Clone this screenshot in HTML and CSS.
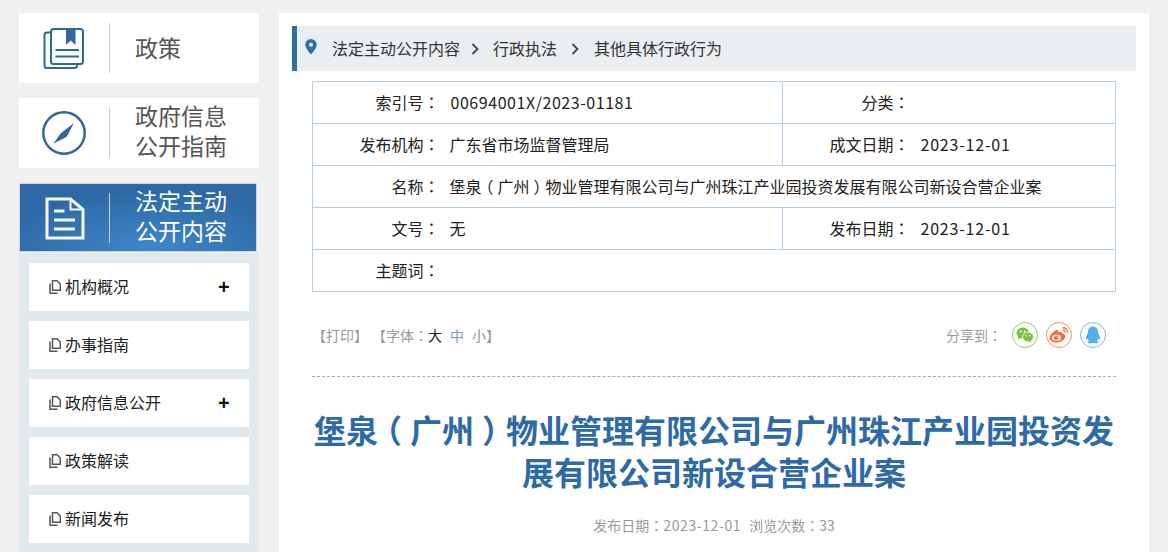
FILE: index.html
```html
<!DOCTYPE html>
<html lang="zh-CN">
<head>
<meta charset="utf-8">
<title>堡泉（广州）物业管理有限公司与广州珠江产业园投资发展有限公司新设合营企业案</title>
<link rel="stylesheet" href="styles.css">
</head>
<body>
<div class="page">
  <aside class="side">
    <a class="card">
      <span class="card-icon">
        <svg width="48" height="48" viewBox="0 0 48 48" fill="none" stroke="#2e689f" stroke-width="2">
          <path d="M10.500 8.500H7a2.500 2.500 0 0 0-2.500 2.500V41.500A2.500 2.500 0 0 0 7 44H34.500a2.500 2.500 0 0 0 2.500-2.500V40"/>
          <rect x="11" y="5" width="32" height="35" rx="2.500"/>
          <path d="M26 5H35.500V21L30.700 16.500 26 21Z" fill="#2e689f" stroke="none"/>
          <path d="M15.500 26H39M15.500 32.500H39"/>
        </svg>
      </span>
      <span class="card-label">政策</span>
    </a>
    <a class="card">
      <span class="card-icon">
        <svg width="48" height="48" viewBox="0 0 48 48" fill="none">
          <circle cx="24" cy="24" r="20.700" stroke="#2e689f" stroke-width="2.500"/>
          <path d="M34 14 26.500 28 21 24Z M13.500 34.500 21 24 26.500 28Z" fill="#2e689f"/>
        </svg>
      </span>
      <span class="card-label card-label-two">政府信息<br>公开指南</span>
    </a>
    <a class="card card-active">
      <span class="card-icon">
        <svg width="48" height="48" viewBox="0 0 48 48" fill="none" stroke="#f4f7fb" stroke-width="3">
          <path d="M6 5H29.500L42 15.500V44H6Z"/>
          <path d="M29.500 5V15.500H42" stroke-width="2"/>
          <path d="M13 17H23.500M13 26H34M13 35H34"/>
        </svg>
      </span>
      <span class="card-label card-label-two">法定主动<br>公开内容</span>
    </a>
    <nav class="menu">
      <a class="menu-item">
        <svg class="copy" width="12" height="14" viewBox="0 0 12 14" fill="none" stroke="#555" stroke-width="1.500"><path d="M4.500.7H8L11.300 4V10.300H3.500V.7Z"/><path d="M1 3.500V13.300H8.500"/></svg>
        <span class="menu-text">机构概况</span><span class="plus">+</span>
      </a>
      <a class="menu-item">
        <svg class="copy" width="12" height="14" viewBox="0 0 12 14" fill="none" stroke="#555" stroke-width="1.500"><path d="M4.500.7H8L11.300 4V10.300H3.500V.7Z"/><path d="M1 3.500V13.300H8.500"/></svg>
        <span class="menu-text">办事指南</span>
      </a>
      <a class="menu-item">
        <svg class="copy" width="12" height="14" viewBox="0 0 12 14" fill="none" stroke="#555" stroke-width="1.500"><path d="M4.500.7H8L11.300 4V10.300H3.500V.7Z"/><path d="M1 3.500V13.300H8.500"/></svg>
        <span class="menu-text">政府信息公开</span><span class="plus">+</span>
      </a>
      <a class="menu-item">
        <svg class="copy" width="12" height="14" viewBox="0 0 12 14" fill="none" stroke="#555" stroke-width="1.500"><path d="M4.500.7H8L11.300 4V10.300H3.500V.7Z"/><path d="M1 3.500V13.300H8.500"/></svg>
        <span class="menu-text">政策解读</span>
      </a>
      <a class="menu-item">
        <svg class="copy" width="12" height="14" viewBox="0 0 12 14" fill="none" stroke="#555" stroke-width="1.500"><path d="M4.500.7H8L11.300 4V10.300H3.500V.7Z"/><path d="M1 3.500V13.300H8.500"/></svg>
        <span class="menu-text">新闻发布</span>
      </a>
    </nav>
  </aside>
  <main class="main">
    <div class="crumbs">
      <svg class="pin" width="12" height="16" viewBox="0 0 12 16"><path fill-rule="evenodd" d="M6 0a5.700 5.700 0 0 1 5.700 5.700C11.700 9.500 6 15.500 6 15.500S.3 9.500.3 5.700A5.700 5.700 0 0 1 6 0Zm0 3.700a2 2 0 1 0 0 4 2 2 0 0 0 0-4Z" fill="#2e6fa8"/></svg>
      <span class="crumb">法定主动公开内容</span>
      <svg class="chev" width="8" height="12" viewBox="0 0 8 12" fill="none" stroke="#444" stroke-width="1.800"><path d="M1.500 1 6.500 6 1.500 11"/></svg>
      <span class="crumb">行政执法</span>
      <svg class="chev chev-wide" width="8" height="12" viewBox="0 0 8 12" fill="none" stroke="#444" stroke-width="1.800"><path d="M1.500 1 6.500 6 1.500 11"/></svg>
      <span class="crumb">其他具体行政行为</span>
    </div>
    <div class="article">
      <table class="info">
        <colgroup><col class="c-label"><col class="c-value"><col class="c-label"><col class="c-rest"></colgroup>
        <tr><th>索引号<span class="p" lang="zh-TW">：</span></th><td><span class="code">00694001X/2023-01181</span></td><th>分类<span class="p" lang="zh-TW">：</span></th><td></td></tr>
        <tr><th>发布机构<span class="p" lang="zh-TW">：</span></th><td>广东省市场监督管理局</td><th>成文日期<span class="p" lang="zh-TW">：</span></th><td><span class="date">2023-12-01</span></td></tr>
        <tr><th>名称<span class="p" lang="zh-TW">：</span></th><td colspan="3">堡泉<span class="paren">（</span>广州<span class="paren">）</span>物业管理有限公司与广州珠江产业园投资发展有限公司新设合营企业案</td></tr>
        <tr><th>文号<span class="p" lang="zh-TW">：</span></th><td>无</td><th>发布日期<span class="p" lang="zh-TW">：</span></th><td><span class="date">2023-12-01</span></td></tr>
        <tr><th>主题词<span class="p" lang="zh-TW">：</span></th><td colspan="3"></td></tr>
      </table>
      <div class="tools">
        <div class="tools-left">
          <span>【打印】</span>
          <span>【字体<span class="p" lang="zh-TW">：</span><b class="size-on">大</b><b class="size">中</b><b class="size">小</b>】</span>
        </div>
        <div class="share">
          <span class="share-label">分享到<span class="p" lang="zh-TW">：</span></span>
          <span class="share-btn wx">
            <svg width="18" height="16" viewBox="0 0 18 16"><ellipse cx="6.800" cy="6" rx="6.300" ry="5.500" fill="#7ac143"/><path d="M2.500 9 2 12.500 5.500 10.500Z" fill="#7ac143"/><ellipse cx="12" cy="10" rx="5.500" ry="4.800" fill="#7ac143" stroke="#fff" stroke-width=".8"/><path d="M14.500 13.500 15.500 15.800 12.500 14.500Z" fill="#7ac143"/><circle cx="4.700" cy="4.500" r=".9" fill="#fff"/><circle cx="8.700" cy="4.500" r=".9" fill="#fff"/><circle cx="10.200" cy="8.800" r=".7" fill="#fff"/><circle cx="13.800" cy="8.800" r=".7" fill="#fff"/></svg>
          </span>
          <span class="share-btn wb">
            <svg width="20" height="16" viewBox="0 0 20 16" fill="none"><path d="M7.500 15.500C3.500 15.500.5 13.600.5 11c0-2.500 3.400-6.500 6.500-7.800 1.800-.7 2.800.4 2.200 2.300 2.200-.9 4.200-.6 4 1 2.100.7 3 1.700 3 3.100 0 3-3.700 5.900-8.700 5.900Z" fill="#f4693a"/><ellipse cx="7.500" cy="10.800" rx="4.800" ry="3.300" fill="#fbd9cc"/><circle cx="7" cy="11" r="1.900" fill="#f4693a"/><path d="M13.500.8c2.900-.4 5.300 2 4.700 5M13.800 3.300c1.400-.2 2.300.8 2 2.200" stroke="#f4693a" stroke-width="1.300"/></svg>
          </span>
          <span class="share-btn qq">
            <svg width="16" height="18" viewBox="0 0 16 18"><path d="M8 .5c3.200 0 5 2.300 5 5.300 0 1 .2 1.500.7 2.300.9 1.500 1.600 3.400 1.300 5-.2.800-1 .3-1.700-.7-.3 1.100-.8 1.900-1.500 2.500 1.100.4 1.700 1 1.500 1.600-.3.700-2 1-3 .8-.9-.1-1.500-.6-2.300-.6s-1.400.5-2.300.6c-1 .2-2.700-.1-3-.8-.2-.6.400-1.200 1.500-1.600-.7-.6-1.200-1.400-1.500-2.500-.7 1-1.500 1.500-1.700.7-.3-1.600.4-3.500 1.300-5C2.800 7.300 3 6.800 3 5.800 3 2.800 4.800.5 8 .5Z" fill="#4fb0ea"/></svg>
          </span>
        </div>
      </div>
      <h1 class="title">堡泉<span class="paren">（</span>广州<span class="paren">）</span>物业管理有限公司与广州珠江产业园投资发展有限公司新设合营企业案</h1>
      <div class="meta"><span>发布日期<span class="p" lang="zh-TW">：</span><span class="meta-num">2023-12-01</span></span><span>浏览次数<span class="p" lang="zh-TW">：</span>33</span></div>
    </div>
  </main>
</div>
</body>
</html>
```
FILE: styles.css
```css
* { box-sizing: border-box; }
html, body { margin: 0; height: 552px; overflow: hidden; }
body { background: #f0f0f0; font-family: "Noto Sans CJK SC", "Open Sans", sans-serif; color: #222; }
.page { display: flex; gap: 20px; padding: 13px 0 0 19px; align-items: flex-start; }
.p { font-family: "Noto Sans CJK TC", sans-serif; }
.paren { font-feature-settings: "halt"; margin: 0 .25em; }

.side { width: 240px; flex: none; display: flex; flex-direction: column; }
.card { height: 70px; background: #fff; display: flex; align-items: center; margin-bottom: 15px; }
.card-icon { width: 91px; height: 50px; flex: none; display: flex; align-items: center; justify-content: center; border-right: 1px solid #ccc; margin-right: 25px; }
.card-label { font-size: 23px; line-height: 30px; color: #555; padding-bottom: 2px; }
.card-label-two { padding-bottom: 6px; }
.card-active { width: 238px; height: 69px; margin-bottom: 1px; border: 1px solid #c6d6e4; background: radial-gradient(ellipse 150px 60px at 55% 100%, #3f87ca 0%, #2e69a6 100%); }
.card-active .card-icon { width: 90px; border-right-color: #c6d6e4; }
.card-active .card-label { color: #fff; }

.menu { background: #dfe9ee; padding: 10px; display: flex; flex-direction: column; gap: 10px; }
.menu-item { height: 48px; background: #fff; display: flex; align-items: center; padding: 0 21px 0 20px; font-size: 16px; color: #222; }
.copy { flex: none; margin-right: 4px; }
.menu-text { flex: 1; line-height: 24px; padding-bottom: 2px; }
.plus { font: bold 20px/1 "Liberation Sans", sans-serif; color: #111; width: 10px; text-align: center; }

.main { width: 870px; flex: none; background: #fff; padding: 13px; height: 560px; }
.crumbs { height: 45px; background: #ebeef1; border-left: 5px solid #2e6fa8; display: flex; align-items: center; padding-left: 8px; font-size: 16px; color: #333; }
.pin { flex: none; margin: -4px 15px 0 0; }
.crumb { line-height: 24px; padding-bottom: 2px; }
.chev { flex: none; margin: 0 14px 0 11px; }
.chev-wide { margin: 0 15px 0 14px; }

.article { padding: 10px 20px 0 20px; width: 844px; }
.info { width: 804px; border-collapse: collapse; table-layout: fixed; font-size: 16px; }
.c-label { width: 138px; }
.c-value { width: 332px; }
.info th, .info td { height: 42px; border: 1px solid #b5cde2; padding: 0 0 2px; font-weight: 400; color: #222; }
.info th { border-right: 0; text-align: right; padding-right: 11px; }
.info td { border-left: 0; text-indent: -1px; }
.code { letter-spacing: .55px; margin-left: 1px; }
.date { letter-spacing: .8px; margin-left: 1px; }

.tools { display: flex; justify-content: space-between; align-items: center; height: 85px; padding: 1px 10px 0 0; border-bottom: 1px dashed #aaa; font-size: 14px; color: #999; }
.tools-left { display: flex; gap: 4px; }
.size-on, .size { font-weight: 400; margin-right: 8px; }
.size-on { color: #222; }
.size { color: #7f96ad; }
.size:last-of-type { margin-right: 0; }
.share { display: flex; align-items: center; gap: 8px; }
.share-label { margin-right: 2px; }
.share-btn { width: 26px; height: 26px; border-radius: 50%; border: 1px solid; display: flex; align-items: center; justify-content: center; }
.wx { border-color: #8ecb62; }
.wb { border-color: #f78a62; }
.qq { border-color: #6cbcec; }

.title { margin: 31px 0 0; font-size: 32px; line-height: 42px; font-weight: 700; text-align: center; color: #2e6aa5; }
.meta { margin-top: 23px; display: flex; justify-content: center; gap: 8px; font-size: 14px; line-height: 20px; color: #999; }
.meta-num { letter-spacing: .6px; }
```
